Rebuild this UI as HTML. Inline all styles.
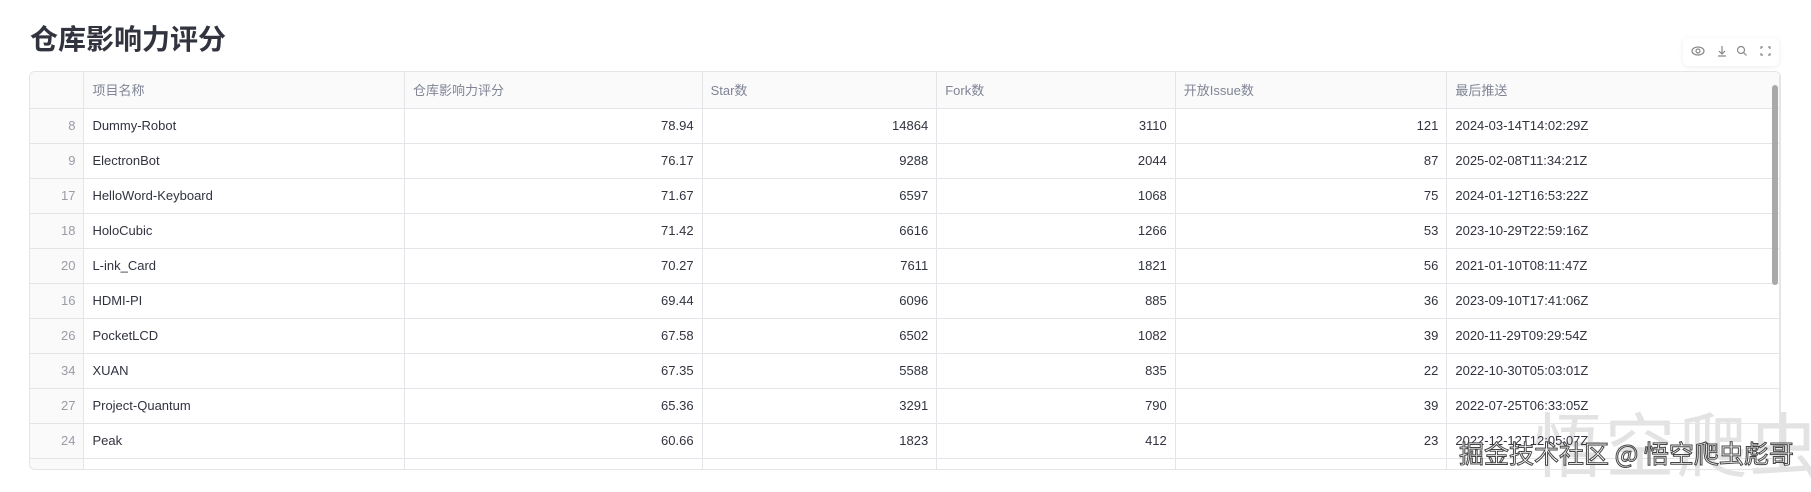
<!DOCTYPE html>
<html><head><meta charset="utf-8"><style>
body{margin:0;width:1811px;height:484px;background:#fff;overflow:hidden;position:relative;font-family:"Liberation Sans","Noto Sans CJK SC",sans-serif;}
h1{position:absolute;left:30px;top:18px;margin:0;font-size:28px;font-weight:700;color:#31333f;font-family:"Noto Sans CJK SC",sans-serif;}
.tbl{position:absolute;left:29px;top:71px;width:1752px;height:399px;border:1px solid #e4e5e8;border-radius:6px;overflow:hidden;box-sizing:border-box;}
table{border-collapse:collapse;table-layout:fixed;font-size:13px;color:#31333f;}
td,th{height:35px;padding:0 8px;border-right:1px solid #e4e5e8;border-bottom:1px solid #e4e5e8;box-sizing:border-box;white-space:nowrap;}
th{font-weight:400;color:#808495;text-align:left;background:#fafafb;height:36px;}
td.n{text-align:right}
td.i{text-align:right;color:#9a9ca6;background:#fafafb}
.sb{position:absolute;left:1772px;top:85px;width:6px;height:200px;background:#a9a9a9;border-radius:3px;}
.tool{position:absolute;left:1683px;top:38px;width:96px;height:28px;background:#fff;box-shadow:0 1px 6px rgba(0,0,0,.08);border-radius:6px;}
.wm1{position:absolute;left:1533px;top:400px;font-size:70px;color:#e3e3e3;font-family:"Noto Sans CJK SC",sans-serif;letter-spacing:2px;white-space:nowrap;line-height:1.2;}
.wm2{position:absolute;left:1459px;top:438px;font-size:25px;line-height:30px;color:#fff;font-family:"Noto Sans CJK SC",sans-serif;-webkit-text-stroke:1px #444;white-space:nowrap;}
</style></head><body>
<h1>仓库影响力评分</h1>
<div class="wm1">悟空爬虫</div>
<div class="tool"><svg width="96" height="28" viewBox="0 0 96 28" fill="none" stroke="#888" stroke-width="1.2">
<ellipse cx="15" cy="13" rx="6" ry="4"/><circle cx="15" cy="13" r="2"/>
<path d="M39 8v8M36 13l3 3 3-3M35 18h8"/>
<circle cx="58" cy="12" r="3.5"/><path d="M60.5 14.5l3 3"/>
<path d="M80 9h-2v2M85 9h2v2M80 17h-2v-2M85 17h2v-2"/></svg></div>
<div class="tbl"><table>
<colgroup><col style="width:54px"><col style="width:321px"><col style="width:298px"><col style="width:235px"><col style="width:239px"><col style="width:272px"><col style="width:333px"></colgroup>
<tr><th></th><th>项目名称</th><th>仓库影响力评分</th><th>Star数</th><th>Fork数</th><th>开放Issue数</th><th>最后推送</th></tr>
<tr><td class="i">8</td><td>Dummy-Robot</td><td class="n">78.94</td><td class="n">14864</td><td class="n">3110</td><td class="n">121</td><td>2024-03-14T14:02:29Z</td></tr>
<tr><td class="i">9</td><td>ElectronBot</td><td class="n">76.17</td><td class="n">9288</td><td class="n">2044</td><td class="n">87</td><td>2025-02-08T11:34:21Z</td></tr>
<tr><td class="i">17</td><td>HelloWord-Keyboard</td><td class="n">71.67</td><td class="n">6597</td><td class="n">1068</td><td class="n">75</td><td>2024-01-12T16:53:22Z</td></tr>
<tr><td class="i">18</td><td>HoloCubic</td><td class="n">71.42</td><td class="n">6616</td><td class="n">1266</td><td class="n">53</td><td>2023-10-29T22:59:16Z</td></tr>
<tr><td class="i">20</td><td>L-ink_Card</td><td class="n">70.27</td><td class="n">7611</td><td class="n">1821</td><td class="n">56</td><td>2021-01-10T08:11:47Z</td></tr>
<tr><td class="i">16</td><td>HDMI-PI</td><td class="n">69.44</td><td class="n">6096</td><td class="n">885</td><td class="n">36</td><td>2023-09-10T17:41:06Z</td></tr>
<tr><td class="i">26</td><td>PocketLCD</td><td class="n">67.58</td><td class="n">6502</td><td class="n">1082</td><td class="n">39</td><td>2020-11-29T09:29:54Z</td></tr>
<tr><td class="i">34</td><td>XUAN</td><td class="n">67.35</td><td class="n">5588</td><td class="n">835</td><td class="n">22</td><td>2022-10-30T05:03:01Z</td></tr>
<tr><td class="i">27</td><td>Project-Quantum</td><td class="n">65.36</td><td class="n">3291</td><td class="n">790</td><td class="n">39</td><td>2022-07-25T06:33:05Z</td></tr>
<tr><td class="i">24</td><td>Peak</td><td class="n">60.66</td><td class="n">1823</td><td class="n">412</td><td class="n">23</td><td>2022-12-12T12:05:07Z</td></tr>
<tr><td class="i"></td><td></td><td></td><td></td><td></td><td></td><td></td></tr>
</table></div>
<div class="sb"></div>
<div class="wm2">掘金技术社区 @ 悟空爬虫彪哥</div>
</body></html>
